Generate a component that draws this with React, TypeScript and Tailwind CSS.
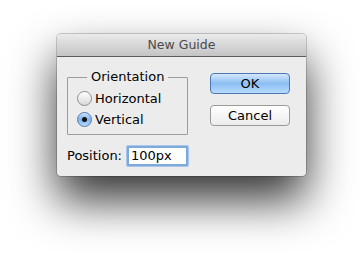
export default function App() {
  return (
    <div
      className="h-[255px] w-[363px] overflow-hidden bg-white pl-[57px] pt-[34px] text-[13px] text-black"
      style={{ fontFamily: '"DejaVu Sans", "Liberation Sans", sans-serif' }}
    >
      <div className="flex w-[249px] flex-col rounded-[4px] bg-[#ececec] shadow-[0_24px_46px_rgba(0,0,0,0.8),0_0_0_1px_rgba(0,0,0,0.18)]">
        {/* title bar */}
        <div className="flex h-[23px] items-center justify-center rounded-t-[4px] border-b border-[#5c5c5c] bg-gradient-to-b from-[#ebebeb] to-[#c4c4c4] text-[12.5px] text-[#4a4a4a]">
          New Guide
        </div>

        <div className="flex pl-[10px] pr-[16px] pb-[10px] pt-[12px]">
          <div className="flex w-[121px] flex-col">
            <fieldset className="h-[66px] rounded-[1px] border border-[#9d9d9d] px-[9px] pt-[3px]">
              <legend className="ml-[10px] px-[4px] leading-[16px]">Orientation</legend>
              <div className="flex h-[21px] items-center gap-[3px]">
                <span className="h-[15px] w-[15px] rounded-full border border-[#8c8c8c] bg-gradient-to-b from-[#ffffff] to-[#d9d9d9] shadow-[inset_0_1px_0_#fff]" />
                <span>Horizontal</span>
              </div>
              <div className="flex h-[21px] items-center gap-[3px]">
                <span className="flex h-[15px] w-[15px] items-center justify-center rounded-full border border-[#4f79ad] bg-gradient-to-b from-[#cfe4fa] via-[#7fb3ea] to-[#b9dafc]">
                  <span className="h-[5px] w-[5px] rounded-full bg-[#111]" />
                </span>
                <span>Vertical</span>
              </div>
            </fieldset>

            <div className="mt-[11px] flex h-[20px] items-center gap-[5px]">
              <span>Position:</span>
              <div className="flex h-[20px] w-[62px] items-center rounded-[1px] border-2 border-[#7ea9dc] bg-white pl-[2px] shadow-[0_0_0_1px_#a9c7ec]">
                100px
              </div>
            </div>
          </div>

          <div className="ml-[22px] mt-[4px] flex w-[80px] flex-col gap-[11px]">
            <div className="flex h-[21px] items-center justify-center rounded-[4px] border border-[#4b78b4] bg-gradient-to-b from-[#d4e8fc] via-[#8cbef3] to-[#b8dbfd]">
              OK
            </div>
            <div className="flex h-[21px] items-center justify-center rounded-[4px] border border-[#9a9a9a] bg-gradient-to-b from-[#ffffff] to-[#ececec]">
              Cancel
            </div>
          </div>
        </div>
      </div>
    </div>
  );
}
